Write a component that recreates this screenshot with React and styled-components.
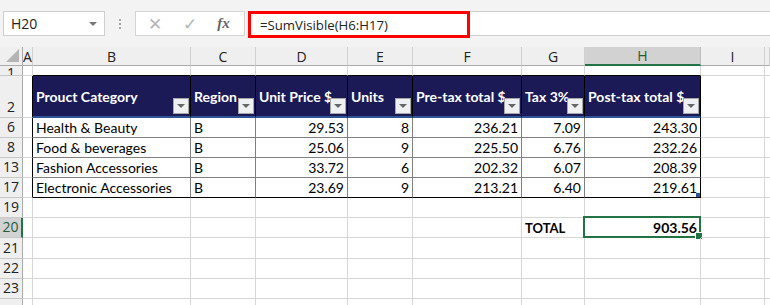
import React from "react";
import styled, { createGlobalStyle } from "styled-components";

const Global = createGlobalStyle`
  html, body { margin: 0; padding: 0; background: #fff; }
  * { box-sizing: border-box; }
`;

const COLS = "23px 10px 158px 65px 92px 65px 109px 63px 116px 64px 5px";
const GRID = "#d6d6d6";
const INNER = "#808080";
const NAVY = "#1b1a57";

const Page = styled.div`
  width: 770px;
  height: 305px;
  overflow: hidden;
  display: flex;
  flex-direction: column;
  background: #fff;
  font-family: Lato, "Liberation Sans", sans-serif;
`;

const Toolbar = styled.div`
  height: 47px;
  flex: none;
  background: #f3f3f3;
  display: flex;
  align-items: flex-start;
  padding: 11px 0 0 3px;
`;

const NameBox = styled.div`
  width: 102px;
  height: 25px;
  background: #fff;
  border: 1px solid #cfcfcf;
  display: flex;
  align-items: center;
  justify-content: space-between;
  padding: 0 7px 0 7px;
  font-family: "Open Sans", "Noto Sans", sans-serif;
  font-size: 14px;
  color: #222;
`;

const Caret = styled.span`
  width: 0;
  height: 0;
  border-left: 4px solid transparent;
  border-right: 4px solid transparent;
  border-top: 4px solid #777;
`;

const Dots = styled.div`
  width: 30px;
  height: 25px;
  display: flex;
  flex-direction: column;
  align-items: center;
  justify-content: center;
  gap: 2px;
  & > i { width: 2px; height: 2px; background: #aaa; display: block; }
`;

const FxBox = styled.div`
  width: 110px;
  height: 25px;
  background: #fff;
  border: 1px solid #d4d4d4;
  display: flex;
  align-items: center;
  justify-content: space-around;
  padding: 0 4px 0 2px;
  color: #b5b5b5;
  font-size: 17px;
`;

const Fx = styled.span`
  font-family: "Liberation Serif", serif;
  font-style: italic;
  font-weight: bold;
  font-size: 15px;
  color: #666;
`;

const FormulaField = styled.div`
  flex: 1;
  margin-left: 3px;
  height: 25px;
  background: #fff;
  border-top: 1px solid #cfcfcf;
  border-bottom: 1px solid #cfcfcf;
  display: flex;
  align-items: stretch;
`;

const Highlight = styled.div`
  width: 222px;
  margin: -1px 0 -3px 0;
  border: 3px solid #ff0000;
  display: flex;
  align-items: center;
  padding-left: 9px;
  font-family: "Open Sans", "Noto Sans", sans-serif;
  font-size: 13.2px;
  color: #222;
`;

const Row = styled.div`
  display: grid;
  grid-template-columns: ${COLS};
  height: ${(p) => p.$h}px;
  flex: none;
`;

const Cell = styled.div`
  position: relative;
  overflow: visible;
  border-right: 1px solid ${(p) => p.$r || GRID};
  border-bottom: ${(p) => p.$bw || 1}px solid ${(p) => p.$b || GRID};
  background: ${(p) => p.$bg || "transparent"};
  color: ${(p) => p.$color || "#000"};
  font-size: ${(p) => p.$fs || 14}px;
  font-weight: ${(p) => (p.$bold ? 700 : 400)};
  display: flex;
  align-items: center;
  justify-content: ${(p) => (p.$right ? "flex-end" : "flex-start")};
  padding: 0 3px;
  white-space: nowrap;
`;

const HeadCell = styled.div`
  border-right: 1px solid ${(p) => (p.$sel ? "#bdbdbd" : "#d0d0d0")};
  border-bottom: ${(p) => (p.$sel ? "2px solid #217346" : "1px solid #ababab")};
  background: ${(p) => (p.$sel ? "#d2d2d2" : "#efefef")};
  color: ${(p) => (p.$sel ? "#1e5d3a" : "#222")};
  font-family: "Open Sans", "Noto Sans", sans-serif;
  font-size: 14px;
  display: flex;
  align-items: center;
  justify-content: center;
  overflow: hidden;
`;

const Corner = styled.div`
  border-right: 1px solid #ababab;
  border-bottom: 1px solid #ababab;
  background: #efefef;
  position: relative;
  &::after {
    content: "";
    position: absolute;
    right: 3px;
    bottom: 3px;
    border-left: 13px solid transparent;
    border-bottom: 13px solid #b4b4b4;
  }
`;

const RowNum = styled.div`
  border-right: ${(p) => (p.$sel ? "2px solid #217346" : "1px solid #ababab")};
  border-bottom: 1px solid #c8c8c8;
  background: ${(p) => (p.$sel ? "#d2d2d2" : "#efefef")};
  color: ${(p) => (p.$sel ? "#1e5d3a" : "#222")};
  font-family: "Open Sans", "Noto Sans", sans-serif;
  font-size: 14px;
  display: flex;
  align-items: ${(p) => (p.$clip ? "flex-start" : "flex-end")};
  justify-content: center;
  padding-bottom: ${(p) => (p.$clip ? 0 : 1)}px;
  overflow: hidden;
  line-height: ${(p) => (p.$clip ? "6px" : "normal")};
  padding-top: ${(p) => (p.$clip ? 4 : 0)}px;
`;

const FilterBtn = styled.span`
  position: absolute;
  right: 1px;
  bottom: 2px;
  width: 16px;
  height: 16px;
  background: #eef0f3;
  border: 1px solid #a6a6a6;
  display: flex;
  align-items: center;
  justify-content: center;
  &::after {
    content: "";
    border-left: 4px solid transparent;
    border-right: 4px solid transparent;
    border-top: 4px solid #666;
  }
`;

const SelectFrame = styled.span`
  position: absolute;
  left: -2px;
  top: -2px;
  right: -1px;
  bottom: -1px;
  border: 2px solid #217346;
  pointer-events: none;
  &::after {
    content: "";
    position: absolute;
    right: -4px;
    bottom: -4px;
    width: 6px;
    height: 6px;
    background: #217346;
    border: 1px solid #fff;
  }
`;

const ResizeMark = styled.span`
  position: absolute;
  right: 0;
  bottom: 0;
  width: 4px;
  height: 4px;
  background: #2f5597;
`;

const colLetters = ["A", "B", "C", "D", "E", "F", "G", "H", "I"];

const headers = [
  "Prouct Category",
  "Region",
  "Unit Price $",
  "Units",
  "Pre-tax total $",
  "Tax 3%",
  "Post-tax total $",
];

const data = [
  ["6", "Health & Beauty", "B", "29.53", "8", "236.21", "7.09", "243.30"],
  ["8", "Food & beverages", "B", "25.06", "9", "225.50", "6.76", "232.26"],
  ["13", "Fashion Accessories", "B", "33.72", "6", "202.32", "6.07", "208.39"],
  ["17", "Electronic Accessories", "B", "23.69", "9", "213.21", "6.40", "219.61"],
];

function EmptyRow({ num, h, sel, clip, tableBottom, children }) {
  return (
    <Row $h={h}>
      <RowNum $sel={sel} $clip={clip}>{num}</RowNum>
      <Cell />
      {children ||
        [0, 1, 2, 3, 4, 5, 6].map((i) => (
          <Cell key={i} $b={tableBottom ? "#000" : undefined} />
        ))}
      <Cell />
      <Cell $r="transparent" />
    </Row>
  );
}

export default function App() {
  return (
    <Page>
      <Global />
      <Toolbar>
        <NameBox>
          <span>H20</span>
          <Caret />
        </NameBox>
        <Dots>
          <i />
          <i />
          <i />
        </Dots>
        <FxBox>
          <span>✕</span>
          <span>✓</span>
          <Fx>fx</Fx>
        </FxBox>
        <FormulaField>
          <Highlight>=SumVisible(H6:H17)</Highlight>
        </FormulaField>
      </Toolbar>

      <Row $h={19}>
        <Corner />
        {colLetters.map((c) => (
          <HeadCell key={c} $sel={c === "H"}>
            {c}
          </HeadCell>
        ))}
        <HeadCell />
      </Row>

      <EmptyRow num="1" h={10} clip tableBottom />

      <Row $h={42}>
        <RowNum>2</RowNum>
        <Cell $r="#000" />
        {headers.map((t) => (
          <Cell
            key={t}
            $bg={NAVY}
            $color="#fff"
            $bold
            $r="#000"
            $bw={2}
            $b="#2f5597"
          >
            {t}
            <FilterBtn />
          </Cell>
        ))}
        <Cell />
        <Cell $r="transparent" />
      </Row>

      {data.map((r, ri) => {
        const last = ri === data.length - 1;
        const b = last ? "#000" : INNER;
        return (
          <Row $h={20} key={r[0]}>
            <RowNum>{r[0]}</RowNum>
            <Cell $r="#000" />
            {r.slice(1).map((v, ci) => (
              <Cell
                key={ci}
                $right={ci >= 2}
                $r={ci === 6 ? "#000" : INNER}
                $b={b}
              >
                {v}
                {last && ci === 6 && <ResizeMark />}
              </Cell>
            ))}
            <Cell />
            <Cell $r="transparent" />
          </Row>
        );
      })}

      <EmptyRow num="19" h={20} />
      <EmptyRow num="20" h={20} sel>
        <Cell />
        <Cell />
        <Cell />
        <Cell />
        <Cell />
        <Cell $bold $fs={13}>TOTAL</Cell>
        <Cell $bold $right>
          903.56
          <SelectFrame />
        </Cell>
      </EmptyRow>
      <EmptyRow num="21" h={21} />
      <EmptyRow num="22" h={20} />
      <EmptyRow num="23" h={20} />
      <EmptyRow num="" h={20} />
    </Page>
  );
}
